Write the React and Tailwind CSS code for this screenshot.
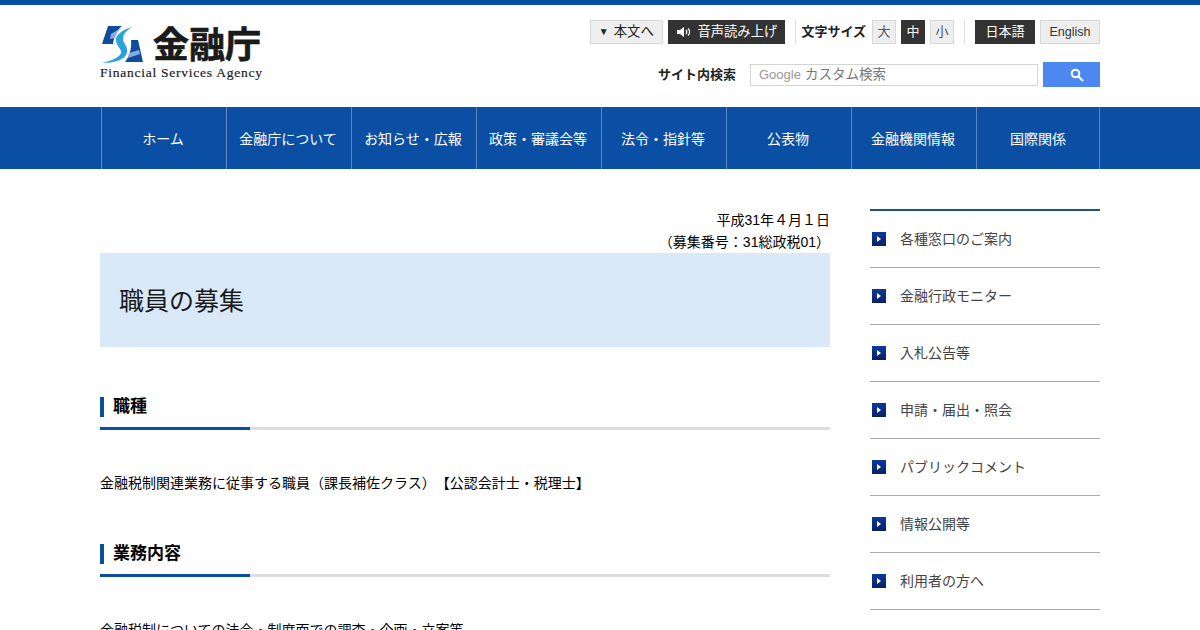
import React from 'react';

const navItems = ['ホーム', '金融庁について', 'お知らせ・広報', '政策・審議会等', '法令・指針等', '公表物', '金融機関情報', '国際関係'];

const sideItems = ['各種窓口のご案内', '金融行政モニター', '入札公告等', '申請・届出・照会', 'パブリックコメント', '情報公開等', '利用者の方へ'];

const fontStack = '[font-family:"Liberation_Sans","Noto_Sans_CJK_JP",sans-serif]';

const Logo = () => (
  <div className="w-[163px] h-[60px] flex flex-col">
    <div className="flex items-start h-[39px]">
      <svg width="44" height="39" viewBox="0 0 44 39" className="shrink-0">
        <path d="M8 1H22C17 5 14 11 13 19H2Z" fill="#0f4c9c" />
        <path d="M11 9L21 3C18 6 16 9 15 13L10 14Z" fill="#86acdf" />
        <path d="M31 15H38L43 37H25C29 32 32 24 31 15Z" fill="#0f4c9c" />
        <path d="M29 28L39 25L40 29L28 33Z" fill="#86acdf" />
        <path d="M32 2C22 5 15 10 16 16C17 22 22 24 21 28C19 33 10 36 2 38C14 38 26 35 27 27C28 21 23 18 23 14C23 9 27 5 32 2Z" fill="#29a3dc" />
      </svg>
      <span className="ml-[9px] mt-[1px] text-[36px] leading-[40px] font-bold text-[#1a1a1a] [-webkit-text-stroke:0.7px_#1a1a1a]">金融庁</span>
    </div>
    <span className="mt-[1px] text-[13.5px] leading-[16px] tracking-[0.75px] text-[#222] whitespace-nowrap [-webkit-text-stroke:0.2px_#222] [font-family:'Liberation_Serif',serif]">Financial Services Agency</span>
  </div>
);

const Header = () => (
  <div className="w-[1000px] mx-auto h-[102px] flex justify-between">
    <div className="pt-[20px]">
      <Logo />
    </div>
    <div className="pt-[15px] flex flex-col items-end">
      <div className="flex items-center h-[24px] text-[13px]">
        <div className="w-[73px] h-[24px] pr-[1px] flex items-center justify-center gap-[5px] bg-[#eeeeee] border border-[#d8d8d8] text-[#222] text-[13.4px]">
          <span className="text-[10px] leading-none">▼</span>
          <span>本文へ</span>
        </div>
        <div className="ml-[5px] w-[117px] h-[24px] flex items-center justify-center gap-[4px] bg-[#333333] text-white text-[13.3px]">
          <svg width="17" height="12" viewBox="0 0 17 12">
            <path d="M1 4H4L8 1V11L4 8H1Z" fill="#fff" />
            <path d="M10 4C11 5 11 7 10 8M12 2.5C14 4.5 14 7.5 12 9.5" stroke="#fff" strokeWidth="1.3" fill="none" />
          </svg>
          <span>音声読み上げ</span>
        </div>
        <div className="ml-[10px] pl-[5px] h-[24px] flex items-center border-l border-[#dddddd] font-bold text-[#222]">文字サイズ</div>
        <div className="ml-[6px] w-[24px] h-[24px] flex items-center justify-center bg-[#eeeeee] border border-[#d8d8d8] text-[#555]">大</div>
        <div className="ml-[5px] w-[24px] h-[24px] flex items-center justify-center bg-[#333333] text-white">中</div>
        <div className="ml-[5px] w-[24px] h-[24px] flex items-center justify-center bg-[#eeeeee] border border-[#d8d8d8] text-[#555]">小</div>
        <div className="ml-[10px] w-px h-[24px] bg-[#dddddd]" />
        <div className="ml-[10px] w-[60px] h-[24px] flex items-center justify-center bg-[#333333] text-white">日本語</div>
        <div className="ml-[5px] w-[60px] h-[24px] flex items-center justify-center bg-[#eeeeee] border border-[#d8d8d8] text-[#333] text-[12.5px]">English</div>
      </div>
      <div className="mt-[18px] flex items-center">
        <span className="text-[13px] font-bold text-[#222]">サイト内検索</span>
        <div className="ml-[14px] w-[288px] h-[22px] mt-[1px] px-[8px] flex items-center border border-[#d4d4d4] text-[13.5px] text-[#777] bg-white">
          <span className="text-[#999] text-[13px] mr-[4px]">Google</span>カスタム検索
        </div>
        <div className="ml-[5px] w-[57px] h-[25px] pl-[11px] flex items-center justify-center bg-[#4d87f0]">
          <svg width="14" height="14" viewBox="0 0 14 14">
            <circle cx="5.5" cy="5.5" r="3.8" stroke="#fff" strokeWidth="2" fill="none" />
            <path d="M8.5 8.5L13 13" stroke="#fff" strokeWidth="2.2" />
          </svg>
        </div>
      </div>
    </div>
  </div>
);

const Nav = () => (
  <div className="h-[62px] bg-[#0a4fa3]">
    <div className="w-[1000px] mx-auto h-full pl-[1px] flex">
      {navItems.map((item) => (
        <div key={item} className="w-[125px] pt-[2px] pr-[2px] border-l border-[#5c87bd] last:w-[124px] last:border-r last:pr-0 flex items-center justify-center text-white text-[14px] font-normal whitespace-nowrap">
          {item}
        </div>
      ))}
    </div>
  </div>
);

const SectionHead = ({ children }) => (
  <div>
    <div className="h-[20px] border-l-[4px] border-[#0a4fa3] pl-[9px] flex items-center text-[17px] font-bold text-black">{children}</div>
    <div className="mt-[10px] h-[3px] bg-[#dddddd]">
      <div className="w-[150px] h-full bg-[#0a4fa3]" />
    </div>
  </div>
);

const Main = () => (
  <div className="w-[730px] text-[14px] text-black">
    <p className="text-right leading-[22px]">平成31年４月１日</p>
    <p className="text-right leading-[22px]">（募集番号：31総政税01）</p>
    <h1 className="h-[94px] pt-[4px] pl-[19px] flex items-center bg-[#d9e9f8] text-[25px] text-[#1a1a1a] font-normal">職員の募集</h1>
    <div className="mt-[50px]">
      <SectionHead>職種</SectionHead>
    </div>
    <p className="mt-[42px] leading-[22px]">金融税制関連業務に従事する職員（課長補佐クラス）【公認会計士・税理士】</p>
    <div className="mt-[50px]">
      <SectionHead>業務内容</SectionHead>
    </div>
    <p className="mt-[42px] leading-[22px]">金融税制についての法令・制度面での調査・企画・立案等</p>
  </div>
);

const Side = () => (
  <div className="w-[230px] border-t-2 border-[#1c5288]">
    {sideItems.map((item) => (
      <div key={item} className="h-[57px] pl-[2px] flex items-center border-b border-[#aaaaaa] text-[14px] text-[#444]">
        <span className="w-[14px] h-[14px] flex items-center justify-center bg-gradient-to-b from-[#0a3a9c] to-[#0a1f66]">
          <span className="w-0 h-0 border-y-[3px] border-y-transparent border-l-[4px] border-l-white" />
        </span>
        <span className="ml-[14px]">{item}</span>
      </div>
    ))}
  </div>
);

const App = () => {
  return (
    <div className={`h-[630px] overflow-hidden bg-white [text-spacing-trim:space-all] ${fontStack}`}>
      <div className="h-[5px] bg-[#0a4fa3]" />
      <Header />
      <Nav />
      <div className="w-[1000px] mx-auto pt-[40px] flex justify-between">
        <Main />
        <Side />
      </div>
    </div>
  );
};

export default App;
